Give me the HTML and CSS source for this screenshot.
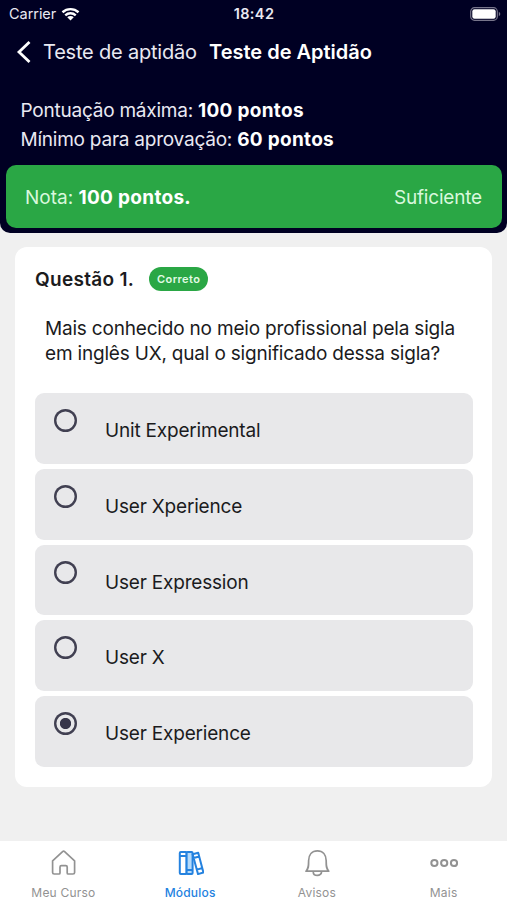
FILE: index.html
```html
<!DOCTYPE html>
<html lang="pt-BR">
<head>
  <meta charset="UTF-8">
  <meta name="viewport" content="width=device-width, initial-scale=1.0">
  <title>Teste de Aptidão</title>
  <link rel="stylesheet" href="styles.css">
</head>

<body>
  <header class="header">
    <div class="status-bar">
      <div class="carrier">
        <span>Carrier</span>
        <svg class="wifi" viewBox="0 0 20 15">
          <path d="M1.4 5.6C6.3 1.2 13.7 1.2 18.6 5.6M4.4 8.9c3.2-2.9 8-2.9 11.2 0" fill="none" stroke="currentColor" stroke-width="2.6" />
          <path d="M6.5 11c2-1.8 5-1.8 7 0L10 14.5z" fill="currentColor" />
        </svg>
      </div>
      <span class="time">18:42</span>
      <svg class="battery" viewBox="0 0 31 14">
        <rect x="0.7" y="0.7" width="26.6" height="12.6" rx="3.8" fill="none" stroke="#77758b" stroke-width="1.2" />
        <rect x="2.3" y="2.3" width="23.4" height="9.4" rx="2.2" fill="#fff" />
        <path d="M28.8 4.8c2 .8 2 3.6 0 4.4z" fill="#77758b" />
      </svg>
    </div>

    <nav class="nav-bar">
      <svg class="back-arrow" viewBox="0 0 16 24">
        <path d="M13.5 2L3 12l10.5 10" fill="none" stroke="currentColor" stroke-width="2.8" />
      </svg>
      <a class="back-label">Teste de aptidão</a>
      <h1 class="title">Teste de Aptidão</h1>
    </nav>

    <div class="summary">
      <p>Pontuação máxima: <b>100 pontos</b></p>
      <p>Mínimo para aprovação: <b>60 pontos</b></p>
    </div>

    <div class="result">
      <span class="score">Nota: <b>100 pontos.</b></span>
      <span>Suficiente</span>
    </div>
  </header>

  <main class="card">
    <div class="card-header">
      <h2 class="question-number">Questão 1.</h2>
      <span class="badge">Correto</span>
    </div>
    <p class="question">
      Mais conhecido no meio profissional pela sigla<br>
      em inglês UX, qual o significado dessa sigla?
    </p>
    <ul class="options">
      <li class="option"><span class="radio"></span><span>Unit Experimental</span></li>
      <li class="option"><span class="radio"></span><span>User Xperience</span></li>
      <li class="option"><span class="radio"></span><span>User Expression</span></li>
      <li class="option"><span class="radio"></span><span>User X</span></li>
      <li class="option"><span class="radio checked"></span><span>User Experience</span></li>
    </ul>
  </main>

  <footer class="tab-bar">
    <a class="tab">
      <svg class="tab-icon" viewBox="0 0 28 28">
        <path d="M3.6 11.8L13.6 2.6q1-.9 2 0l10 9.200v11.600a1.600 1.600 0 0 1-1.600 1.600h-4.800a1 1 0 0 1-1-1v-6a1.400 1.400 0 0 0-1.400-1.400h-4.400a1.400 1.400 0 0 0-1.400 1.400v6a1 1 0 0 1-1 1H5.200a1.600 1.600 0 0 1-1.600-1.600z" />
      </svg>
      <span>Meu Curso</span>
    </a>
    <a class="tab active">
      <svg class="tab-icon books" viewBox="0 0 28 28">
        <rect x="3.8" y="3" width="6.8" height="22" rx="1" />
        <rect class="book-fill" x="10.6" y="3" width="6" height="22" rx="1" />
        <path d="M3.8 7h6.8M10.6 21h6M16.600 5.200l5.600-1.500 5.200 19.800-5.400 1.600zM17.600 9l5.600-1.500M20.800 20.600l5.800-1.600" />
      </svg>
      <span>Módulos</span>
    </a>
    <a class="tab">
      <svg class="tab-icon" viewBox="0 0 28 28">
        <path d="M3 22.200c2.800-3.200 2.600-5.400 2.600-10.400 0-6 3.400-10 8.800-10s8.800 4 8.800 10c0 5-.2 7.200 2.600 10.400zM10.200 22.400c0 5.400 8.400 5.400 8.400 0" />
      </svg>
      <span>Avisos</span>
    </a>
    <a class="tab">
      <svg class="tab-icon dots" viewBox="0 0 28 28">
        <circle cx="4.4" cy="14" r="3.1" />
        <circle cx="14.2" cy="14" r="3.1" />
        <circle cx="24" cy="14" r="3.1" />
      </svg>
      <span>Mais</span>
    </a>
  </footer>
</body>
</html>
```

FILE: styles.css
```css
/* Base styles */
* {
  box-sizing: border-box;
}

body {
  margin: 0;
  width: 507px;
  height: 900px;
  display: flex;
  flex-direction: column;
  background: #f0f0f0;
  color: #1b1b1d;
  font-family: Inter, "Liberation Sans", sans-serif;
  font-size: 19px;
  letter-spacing: -0.19px;
  overflow: hidden;
}

h1,
h2,
p,
ul {
  margin: 0;
  padding: 0;
}

/* Dark header */
.header {
  height: 233px;
  flex-shrink: 0;
  background: #000023;
  color: #e9e9f2;
  border-radius: 0 0 10px 10px;
}

.status-bar {
  height: 27px;
  padding: 0 6px 0 9px;
  display: grid;
  grid-template-columns: 1fr auto 1fr;
  align-items: center;
}

.carrier {
  display: flex;
  align-items: center;
  gap: 5px;
  font-size: 14.5px;
  letter-spacing: -0.05px;
}

.wifi {
  width: 19px;
  height: 14px;
  color: #fff;
}

.time {
  margin-right: 2px;
  font-size: 14.5px;
  font-weight: 600;
  letter-spacing: 0.4px;
}

.battery {
  width: 31px;
  height: 14px;
  justify-self: end;
}

.nav-bar {
  height: 50px;
  padding-left: 16px;
  display: flex;
  align-items: center;
}

.back-arrow {
  width: 16px;
  height: 24px;
  margin-right: 11px;
  color: #fff;
}

.back-label {
  width: 166px;
  font-size: 20px;
  letter-spacing: -0.2px;
}

.title {
  font-size: 20px;
  font-weight: 600;
  letter-spacing: 0;
  color: #fff;
}

.summary {
  height: 88px;
  padding: 20px 20px 0 20.5px;
  line-height: 28.5px;
}

.summary p {
  letter-spacing: -0.23px;
}

.summary b,
.score b {
  font-weight: 700;
  letter-spacing: 0.3px;
  color: #fff;
}

.result {
  height: 63px;
  margin: 0 5px 0 6px;
  padding: 1px 20px 0 19px;
  display: flex;
  align-items: center;
  justify-content: space-between;
  background: #2aa745;
  color: #d9f8dd;
  border-radius: 10px;
}

.score {
  letter-spacing: 0;
}

/* Question card */
.card {
  width: 477px;
  height: 540px;
  margin: 14px 0 0 15px;
  padding: 19px 20px 0;
  flex-shrink: 0;
  background: #fff;
  border-radius: 12px;
}

.card-header {
  height: 26px;
  display: flex;
  align-items: center;
  gap: 15px;
}

.question-number {
  font-size: 19px;
  font-weight: 600;
  letter-spacing: 0.3px;
}

.badge {
  width: 59px;
  height: 24px;
  border-radius: 12px;
  background: #2aa745;
  color: #e2fbe5;
  font-size: 11px;
  font-weight: 600;
  letter-spacing: 0.4px;
  line-height: 24px;
  text-align: center;
}

.question {
  margin-top: 25px;
  padding-left: 10px;
  line-height: 24.5px;
  white-space: nowrap;
}

.options {
  margin-top: 27.4px;
  display: flex;
  flex-direction: column;
  gap: 5px;
  list-style: none;
}

.option {
  width: 438px;
  height: 70.7px;
  padding: 16px 19px 0;
  display: flex;
  align-items: flex-start;
  gap: 28px;
  background: #e8e8ea;
  border-radius: 9px;
  line-height: 44px;
}

.radio {
  width: 23px;
  height: 23px;
  box-shadow: inset 0 0 0 2.4px #414052;
  border-radius: 50%;
}

.radio.checked {
  background: radial-gradient(circle, #37364a 5.2px, transparent 6px);
}

/* Bottom tabs */
.tab-bar {
  height: 59px;
  margin-top: auto;
  display: grid;
  grid-template-columns: repeat(4, 1fr);
  background: #fff;
}

.tab {
  padding-top: 8px;
  display: flex;
  flex-direction: column;
  align-items: center;
  gap: 8px;
  color: #929292;
  font-size: 12px;
  font-weight: 400;
  letter-spacing: 0.2px;
  line-height: 15px;
}

.tab.active {
  color: #2482df;
  font-weight: 500;
}

.tab-icon {
  width: 28px;
  height: 28px;
  fill: none;
  stroke: currentColor;
  stroke-width: 1.7;
  stroke-linejoin: round;
}

.tab-icon.books {
  stroke-width: 2;
}

.tab-icon .book-fill {
  fill: #b5dafa;
}

.tab-icon.dots {
  stroke-width: 2;
}
```
